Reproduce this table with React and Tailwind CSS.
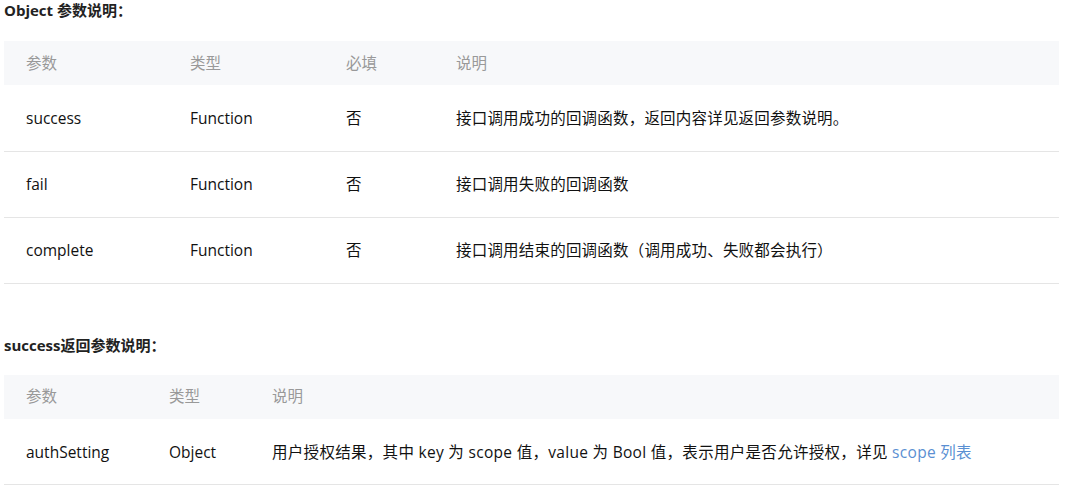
const objectParams = [
  { name: 'success', type: 'Function', required: '否', desc: '接口调用成功的回调函数，返回内容详见返回参数说明。' },
  { name: 'fail', type: 'Function', required: '否', desc: '接口调用失败的回调函数' },
  { name: 'complete', type: 'Function', required: '否', desc: '接口调用结束的回调函数（调用成功、失败都会执行）' },
];

const font = { fontFamily: '"Open Sans", "Noto Sans CJK SC", sans-serif' };

export default function App() {
  return (
    <div className="bg-white w-[1068px] h-[491px] pl-[4px] text-[#111]" style={font}>
      <div className="w-[1055px]">
        {/* Object params */}
        <h3 className="text-[15px] leading-[20px] font-bold text-[#222]">Object 参数说明：</h3>
        <table className="mt-[21px] w-full border-collapse text-[15.5px] table-fixed">
          <colgroup>
            <col className="w-[164px]" />
            <col className="w-[156px]" />
            <col className="w-[110px]" />
            <col />
          </colgroup>
          <thead>
            <tr className="bg-[#f7f8fa] h-[44px] text-left text-[#999]">
              <th className="font-normal pl-[22px] pt-[1px]">参数</th>
              <th className="font-normal pl-[22px] pt-[1px]">类型</th>
              <th className="font-normal pl-[22px] pt-[1px]">必填</th>
              <th className="font-normal pl-[22px] pt-[1px]">说明</th>
            </tr>
          </thead>
          <tbody>
            {objectParams.map(row => (
              <tr key={row.name} className="h-[66px] border-b border-[#e5e5e5]">
                <td className="pl-[22px] pt-[2px]">{row.name}</td>
                <td className="pl-[22px] pt-[2px]">{row.type}</td>
                <td className="pl-[22px] pt-[2px]">{row.required}</td>
                <td className="pl-[22px] pt-[2px] tracking-[0.2px]">{row.desc}</td>
              </tr>
            ))}
          </tbody>
        </table>

        {/* success return params */}
        <h3 className="mt-[51px] text-[15px] leading-[20px] font-bold text-[#222]">success返回参数说明：</h3>
        <table className="mt-[20px] w-full border-collapse text-[15.5px] table-fixed">
          <colgroup>
            <col className="w-[143px]" />
            <col className="w-[103px]" />
            <col />
          </colgroup>
          <thead>
            <tr className="bg-[#f7f8fa] h-[44px] text-left text-[#999]">
              <th className="font-normal pl-[22px] pt-[1px]">参数</th>
              <th className="font-normal pl-[22px] pt-[1px]">类型</th>
              <th className="font-normal pl-[22px] pt-[1px]">说明</th>
            </tr>
          </thead>
          <tbody>
            <tr className="h-[66px] border-b border-[#e5e5e5]">
              <td className="pl-[22px] pt-[2px]">authSetting</td>
              <td className="pl-[22px] pt-[2px]">Object</td>
              <td className="pl-[22px] pt-[2px] tracking-[0.3px]">
                用户授权结果，其中 key 为 scope 值，value 为 Bool 值，表示用户是否允许授权，详见{' '}
                <a className="text-[#5a8fd2]">scope 列表</a>
              </td>
            </tr>
          </tbody>
        </table>
      </div>
    </div>
  );
}
